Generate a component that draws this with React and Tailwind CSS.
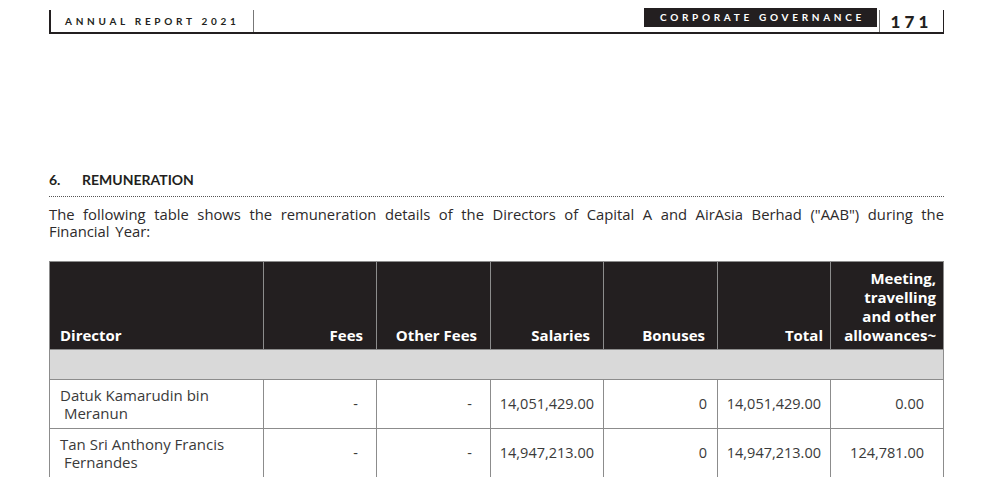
import React from 'react';

const cols = [
  { w: 'w-[214px]' },
  { w: 'w-[113px]' },
  { w: 'w-[114px]' },
  { w: 'w-[113px]' },
  { w: 'w-[114px]' },
  { w: 'w-[113px]' },
  { w: 'w-[113px]' },
];

const rows = [
  {
    name: 'Datuk Kamarudin bin\n\u00a0Meranun',
    values: ['-', '-', '14,051,429.00', '0', '14,051,429.00', '0.00'],
  },
  {
    name: 'Tan Sri Anthony Francis\n\u00a0Fernandes',
    values: ['-', '-', '14,947,213.00', '0', '14,947,213.00', '124,781.00'],
  },
];

const valuePad = ['pr-[18px]', 'pr-[18px]', 'pr-[9px]', 'pr-[10px]', 'pr-[9px]', 'pr-[19px]'];

const App = () => {
  return (
    <div className="w-[993px] h-[477px] overflow-hidden bg-white text-[#231f20] font-['Lato',sans-serif]">
      <div className="ml-[49px] w-[895px]">
        {/* running header */}
        <div className="mt-2 flex h-[26px] border-b-2 border-[#231f20]">
          <div className="mt-[2px] w-[205px] border-l-2 border-r border-l-[#231f20] border-r-[#777] pl-[14px] pt-[5px] text-[10px] font-bold leading-[12px] tracking-[0.37em]">
            ANNUAL REPORT 2021
          </div>
          <div className="flex-1" />
          <div className="flex h-[19px] w-[233px] items-center justify-center bg-[#231f20] pl-[4px] text-[10px] font-bold tracking-[0.37em] text-white">
            CORPORATE GOVERNANCE
          </div>
          <div className="ml-[2px] mt-[2px] flex w-[65px] items-start justify-center border-x border-l-[#777] border-r-[#231f20] pt-[2px] text-[17px] font-black leading-[20px] tracking-[0.24em]">
            171
          </div>
        </div>

        {/* section title */}
        <div className="mt-[137px] flex text-[14px] font-bold leading-[17px]">
          <span className="w-[33px]">6.</span>
          <span>REMUNERATION</span>
        </div>
        <div className="mt-[8px] border-b border-dotted border-[#555]" />

        <p className="mt-[9px] text-justify font-['Open_Sans',sans-serif] text-[14.8px] leading-[17px] text-[#2d2a2b] [word-spacing:2px]">
          The following table shows the remuneration details of the Directors of Capital A and AirAsia Berhad ("AAB") during the Financial Year:
        </p>

        {/* table */}
        <table className="mt-[21px] table-fixed border-collapse font-['Open_Sans',sans-serif] text-[14.5px]">
          <colgroup>
            {cols.map((c, i) => (
              <col key={i} className={c.w} />
            ))}
          </colgroup>
          <thead>
            <tr className="h-[88px] bg-[#231f20] text-[15px] text-white">
              <th className="border border-[#8c8c8c] px-[10px] pb-[4px] text-left align-bottom font-bold leading-[19px]">Director</th>
              <th className="border border-[#8c8c8c] pr-[13px] pb-[4px] text-right align-bottom font-bold leading-[19px]">Fees</th>
              <th className="border border-[#8c8c8c] pr-[13px] pb-[4px] text-right align-bottom font-bold leading-[19px]">Other Fees</th>
              <th className="border border-[#8c8c8c] pr-[13px] pb-[4px] text-right align-bottom font-bold leading-[19px]">Salaries</th>
              <th className="border border-[#8c8c8c] pr-[12px] pb-[4px] text-right align-bottom font-bold leading-[19px]">Bonuses</th>
              <th className="border border-[#8c8c8c] pr-[7px] pb-[4px] text-right align-bottom font-bold leading-[19px]">Total</th>
              <th className="border border-[#8c8c8c] pr-[7px] pb-[4px] text-right align-bottom font-bold leading-[19px]">
                Meeting,
                <br />
                travelling
                <br />
                and other
                <br />
                allowances~
              </th>
            </tr>
          </thead>
          <tbody>
            <tr className="h-[30px] bg-[#d9d9d9]">
              <td colSpan={7} className="border border-[#8c8c8c]" />
            </tr>
            {rows.map((r) => (
              <tr key={r.name} className="h-[49px] text-[#3a3a3a]">
                <td className="whitespace-pre-line border border-[#8c8c8c] px-[10px] py-[5px] align-middle text-[15px] leading-[18px]">
                  {r.name}
                </td>
                {r.values.map((v, i) => (
                  <td key={i} className={`border border-[#8c8c8c] text-right align-middle ${valuePad[i]}`}>
                    {v}
                  </td>
                ))}
              </tr>
            ))}
          </tbody>
        </table>
      </div>
    </div>
  );
};

export default App;
